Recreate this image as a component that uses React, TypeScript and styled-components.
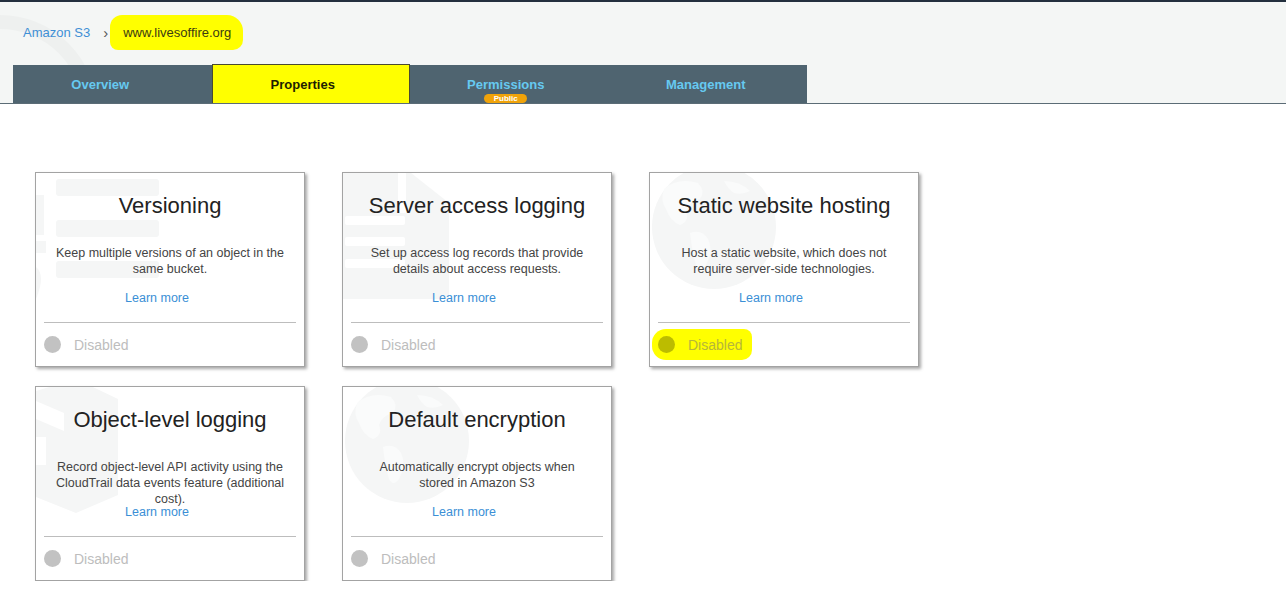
import React from 'react'
import styled, { createGlobalStyle } from 'styled-components'

const GlobalStyle = createGlobalStyle`
  html, body {
    margin: 0;
    padding: 0;
    background: #ffffff;
    font-family: "Liberation Sans", Arial, sans-serif;
  }
  * { box-sizing: border-box; }
`

const TopBar = styled.div`
  height: 2px;
  background: #232f3e;
`

const Header = styled.header`
  position: relative;
  overflow: hidden;
  height: 102px;
  background: #f4f6f5;
  border-bottom: 1px solid #5b6c76;
  display: flex;
  flex-direction: column;
`

const HeaderArc = styled.svg`
  position: absolute;
  left: -60px;
  top: 10px;
`

const Crumbs = styled.nav`
  position: relative;
  height: 63px;
  display: flex;
  align-items: center;
  padding: 0 0 2px 23px;
  font-size: 13px;
`

const CrumbLink = styled.a`
  color: #3f8fd5;
  text-decoration: none;
`

const CrumbSep = styled.span`
  color: #555;
  margin: 0 2px 0 13px;
  font-size: 15px;
`

const CrumbCurrent = styled.span`
  background: #ffff00;
  color: #3b3b12;
  padding: 10px 12px 10px 13px;
  border-radius: 12px 16px 10px 8px;
`

const Tabs = styled.div`
  position: relative;
  display: flex;
  margin-left: 13px;
  width: 794px;
  height: 38px;
  background: #4f6470;
`

const Tab = styled.div<{ $active?: boolean; $shift: number }>`
  flex: 0 0 198.5px;
  display: flex;
  flex-direction: column;
  align-items: center;
  justify-content: center;
  padding-right: ${p => p.$shift}px;
  font-size: 13px;
  font-weight: bold;
  color: ${p => (p.$active ? '#1e1e00' : '#66c9f0')};
  background: ${p => (p.$active ? '#ffff00' : 'transparent')};
  border: ${p => (p.$active ? '1px solid #4a4a30' : 'none')};
  border-bottom: none;
  margin-top: ${p => (p.$active ? '-1px' : '0')};
  height: ${p => (p.$active ? '39px' : '38px')};
`

const Badge = styled.span`
  margin-top: 2px;
  margin-bottom: -11px;
  width: 43px;
  height: 9px;
  border-radius: 5px;
  background: #f0a30a;
  color: #fff;
  font-size: 8px;
  line-height: 9px;
  font-weight: bold;
  text-align: center;
`

const Content = styled.main`
  display: grid;
  grid-template-columns: repeat(3, 270px);
  column-gap: 37px;
  row-gap: 19px;
  padding: 68px 0 0 35px;
`

const Card = styled.section`
  position: relative;
  overflow: hidden;
  height: 195px;
  background: #fff;
  border: 1px solid #a3a3a3;
  box-shadow: 2px 2px 3px rgba(0, 0, 0, 0.35);
  display: flex;
  flex-direction: column;
  align-items: center;
  text-align: center;
`

const Art = styled.svg`
  position: absolute;
  left: 0;
  top: 0;
`

const Title = styled.h2`
  position: relative;
  margin: 20px 0 0;
  font-size: 22px;
  line-height: 26px;
  font-weight: normal;
  color: #222;
`

const Desc = styled.p`
  position: relative;
  margin: 26px 0 0;
  width: 231px;
  height: 37px;
  font-size: 12.5px;
  line-height: 16px;
  color: #444;
`

const Learn = styled.a`
  position: relative;
  margin: 8px 26px 0 0;
  font-size: 12.5px;
  line-height: 16px;
  color: #3b8fd6;
  text-decoration: none;
`

const Footer = styled.div`
  position: relative;
  align-self: stretch;
  margin: auto 8px 0;
  border-top: 1px solid #bdbdbd;
  height: 44px;
  display: flex;
  align-items: center;
`

const Status = styled.div<{ $marked?: boolean }>`
  display: flex;
  align-items: center;
  gap: 13px;
  padding: ${p => (p.$marked ? '7px 10px 7px 6px' : '0')};
  margin-left: ${p => (p.$marked ? '-6px' : '0')};
  background: ${p => (p.$marked ? '#ffff00' : 'transparent')};
  border-radius: 14px 8px 10px 14px;
  font-size: 14px;
  color: ${p => (p.$marked ? '#b6b63a' : '#bdbdbd')};
`

const Dot = styled.span<{ $marked?: boolean }>`
  width: 17px;
  height: 17px;
  border-radius: 50%;
  background: ${p => (p.$marked ? '#bcbc00' : '#c2c2c2')};
`

const ART = '#f5f6f6'
const LIGHT = '#fafbfb'

function Bars() {
  return (
    <Art width="140" height="140">
      <rect x="20" y="6" width="103" height="17" rx="3" fill={ART} />
      <rect x="20" y="47" width="103" height="17" rx="3" fill={ART} />
      <rect x="20" y="88" width="103" height="17" rx="3" fill={ART} />
      <path d="M0 22 h8 v40 h-8z M0 68 h10 v12 h-10z M0 94 q10 8 0 32z" fill={ART} />
    </Art>
  )
}

function Doc() {
  return (
    <Art width="140" height="140">
      <path d="M0 0 H68 L106 30 V126 H0 Z" fill={ART} />
      <path d="M55 0 H63 V40 H55 Z" fill="#fff" />
      <rect x="2" y="43" width="60" height="9" rx="2" fill="#fff" />
      <rect x="2" y="64" width="60" height="9" rx="2" fill="#fff" />
      <rect x="2" y="86" width="60" height="9" rx="2" fill="#fff" />
    </Art>
  )
}

function Globe() {
  return (
    <Art width="140" height="140">
      <circle cx="64" cy="54" r="62" fill={ART} />
      <path d="M14 16 q14 -12 34 -6 q8 8 2 16 q-10 2 -14 12 q4 10 -6 14 q-10 -4 -14 -16 q-6 -8 -2 -20z" fill={LIGHT} />
      <path d="M40 60 q12 -4 18 6 q6 12 -2 26 q-6 8 -10 0 q-4 -14 -6 -32z" fill={LIGHT} />
      <path d="M74 8 q16 0 26 10 q-8 4 -16 2 q-6 -4 -10 -12z" fill={LIGHT} />
    </Art>
  )
}

function Hex() {
  return (
    <Art width="140" height="140">
      <path d="M0 4 L40 -8 L82 12 L82 108 L40 126 L0 110 Z" fill={ART} />
      <path d="M0 14 L28 26 V44 L0 32 Z" fill="#fff" />
      <rect x="0" y="50" width="10" height="28" fill="#fff" />
    </Art>
  )
}

type Feature = {
  title: string
  desc: string
  art: React.ReactNode
  marked?: boolean
}

const features: Feature[] = [
  { title: 'Versioning', desc: 'Keep multiple versions of an object in the same bucket.', art: <Bars /> },
  { title: 'Server access logging', desc: 'Set up access log records that provide details about access requests.', art: <Doc /> },
  { title: 'Static website hosting', desc: 'Host a static website, which does not require server-side technologies.', art: <Globe />, marked: true },
  { title: 'Object-level logging', desc: 'Record object-level API activity using the CloudTrail data events feature (additional cost).', art: <Hex /> },
  { title: 'Default encryption', desc: 'Automatically encrypt objects when stored in Amazon S3', art: <Globe /> },
]

export default function App() {
  return (
    <>
      <GlobalStyle />
      <TopBar />
      <Header>
        <HeaderArc width="200" height="120">
          <circle cx="60" cy="100" r="90" fill="none" stroke="#eef0ef" strokeWidth="14" />
        </HeaderArc>
        <Crumbs>
          <CrumbLink href="#">Amazon S3</CrumbLink>
          <CrumbSep>›</CrumbSep>
          <CrumbCurrent>www.livesoffire.org</CrumbCurrent>
        </Crumbs>
        <Tabs>
          <Tab $shift={24}>Overview</Tab>
          <Tab $shift={16} $active>Properties</Tab>
          <Tab $shift={7}>
            Permissions
            <Badge>Public</Badge>
          </Tab>
          <Tab $shift={4}>Management</Tab>
        </Tabs>
      </Header>
      <Content>
        {features.map(f => (
          <Card key={f.title}>
            {f.art}
            <Title>{f.title}</Title>
            <Desc>{f.desc}</Desc>
            <Learn href="#">Learn more</Learn>
            <Footer>
              <Status $marked={f.marked}>
                <Dot $marked={f.marked} />
                Disabled
              </Status>
            </Footer>
          </Card>
        ))}
      </Content>
    </>
  )
}
